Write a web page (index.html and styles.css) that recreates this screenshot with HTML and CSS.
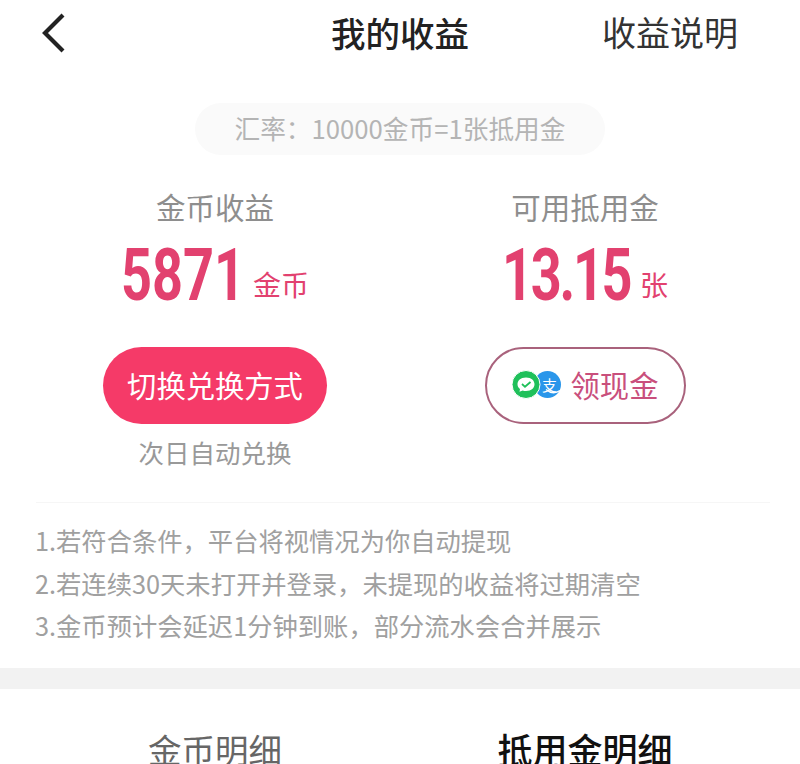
FILE: index.html
```html
<!DOCTYPE html>
<html lang="zh">
<head>
    <meta charset="utf-8" />
    <title>我的收益</title>
    <link rel="stylesheet" href="styles.css">
</head>
<body>
    <div class="top">
        <a class="back" href="#">
            <svg width="30" height="44" viewBox="0 0 30 44"><path d="M21 4 L3 22 L21 40" fill="none" stroke="#222" stroke-width="4.2" /></svg>
        </a>
        <h2>我的收益</h2>
        <a class="explain" href="#">收益说明</a>
    </div>
    <div class="rate"><span>汇率：10000金币=1张抵用金</span></div>
    <div class="cols">
        <div class="col">
            <h3>金币收益</h3>
            <div class="num"><b>5871</b><span>金币</span></div>
            <a class="btn btn-red" href="#">切换兑换方式</a>
            <p class="tip">次日自动兑换</p>
        </div>
        <div class="col">
            <h3>可用抵用金</h3>
            <div class="num"><b class="wide">13.15</b><span>张</span></div>
            <a class="btn btn-line" href="#">
                <svg width="50" height="29" viewBox="0 0 50 28">
                    <circle cx="35.500" cy="14" r="13.500" fill="#2a96ea" />
                    <text x="30" y="20" class="zhi">支</text>
                    <path d="M34 19 Q41 25 48 20" fill="none" stroke="#fff" stroke-width="1.500" />
                    <circle cx="14" cy="14" r="14" fill="#1fc05a" stroke="#fff" stroke-width="1" />
                    <path d="M14 7 C8.500 7 5.500 10.300 5.500 13.800 C5.500 15.800 6.500 17.500 8 18.600 L7.500 21.300 L10.700 20 C11.700 20.400 12.800 20.500 14 20.500 C19.500 20.500 22.500 17.300 22.500 13.800 C22.500 10.300 19.500 7 14 7 Z" fill="#fff" />
                    <path d="M10 13.500 L13 16.300 L18.500 11.500" fill="none" stroke="#1fc05a" stroke-width="1.800" />
                </svg>
                领现金
            </a>
        </div>
    </div>
    <div class="notes">
        <p>1.若符合条件，平台将视情况为你自动提现</p>
        <p>2.若连续30天未打开并登录，未提现的收益将过期清空</p>
        <p>3.金币预计会延迟1分钟到账，部分流水会合并展示</p>
    </div>
    <div class="band"></div>
    <div class="tabs">
        <a href="#">金币明细</a>
        <a class="on" href="#">抵用金明细</a>
    </div>
</body>
</html>
```

FILE: styles.css
```css
* { box-sizing: border-box; margin: 0; padding: 0; }
html, body { height: 764px; overflow: hidden; }
body { background: #fff; font-family: "Noto Sans CJK SC", "Liberation Sans", sans-serif; color: #222; }
a { text-decoration: none; color: inherit; }

.top { height: 66px; display: grid; grid-template-columns: 1fr auto 1fr; align-items: center; padding: 0 62px 3px; }
.top .back { display: block; height: 44px; margin: 3px 0 0 -20px; }
.top h2 { font-size: 34.500px; line-height: 40px; font-weight: 500; color: #222; }
.top .explain { justify-self: end; font-size: 34px; line-height: 40px; color: #333; }

.rate { display: flex; justify-content: center; margin-top: 37px; }
.rate span { width: 410px; height: 52px; line-height: 50px; text-align: center; border-radius: 26px; background: #fafafa; color: #b4b4b4; font-size: 25.700px; }

.cols { display: grid; grid-template-columns: 370px 370px; padding-left: 30px; margin-top: 31px; }
.col { display: flex; flex-direction: column; align-items: center; }
.col h3 { font-size: 29.500px; line-height: 40px; font-weight: 400; color: #8e8e8e; }
.num { height: 78px; margin-top: 11px; color: #e2416f; white-space: nowrap; }
.num b { display: inline-block; font-family: Roboto, "Liberation Sans", sans-serif; font-size: 72px; line-height: 78px; font-weight: 700; transform: scaleX(.75); transform-origin: left; margin-right: -41px; }
.num b.wide { letter-spacing: -3px; }
.num span { font-size: 28px; margin-left: 8px; font-weight: 400; vertical-align: 4px; }

.btn { display: flex; align-items: center; justify-content: center; height: 77px; margin-top: 32px; padding-bottom: 3px; border-radius: 39px; font-size: 29.300px; }
.btn-red { width: 224px; background: #f53a68; color: #fff; }
.btn-line { width: 201px; border: 2px solid #a9627c; color: #c94f7c; gap: 9px; }
.zhi { font-size: 15px; fill: #fff; }
.tip { margin-top: 10px; font-size: 25.500px; line-height: 36px; color: #999; }

.notes { margin: 32px 30px 0 36px; padding-top: 16px; border-top: 1px solid #f6f6f6; }
.notes p { font-size: 25.300px; line-height: 42.500px; color: #a0a0a0; margin-left: -1px; }

.band { height: 21px; margin-top: 21px; background: #f2f2f2; }

.tabs { display: grid; grid-template-columns: 370px 370px; padding-left: 30px; margin-top: 38px; text-align: center; }
.tabs a { font-size: 33.500px; line-height: 44px; color: #666; }
.tabs a.on { font-size: 35px; font-weight: 500; color: #111; }
```
